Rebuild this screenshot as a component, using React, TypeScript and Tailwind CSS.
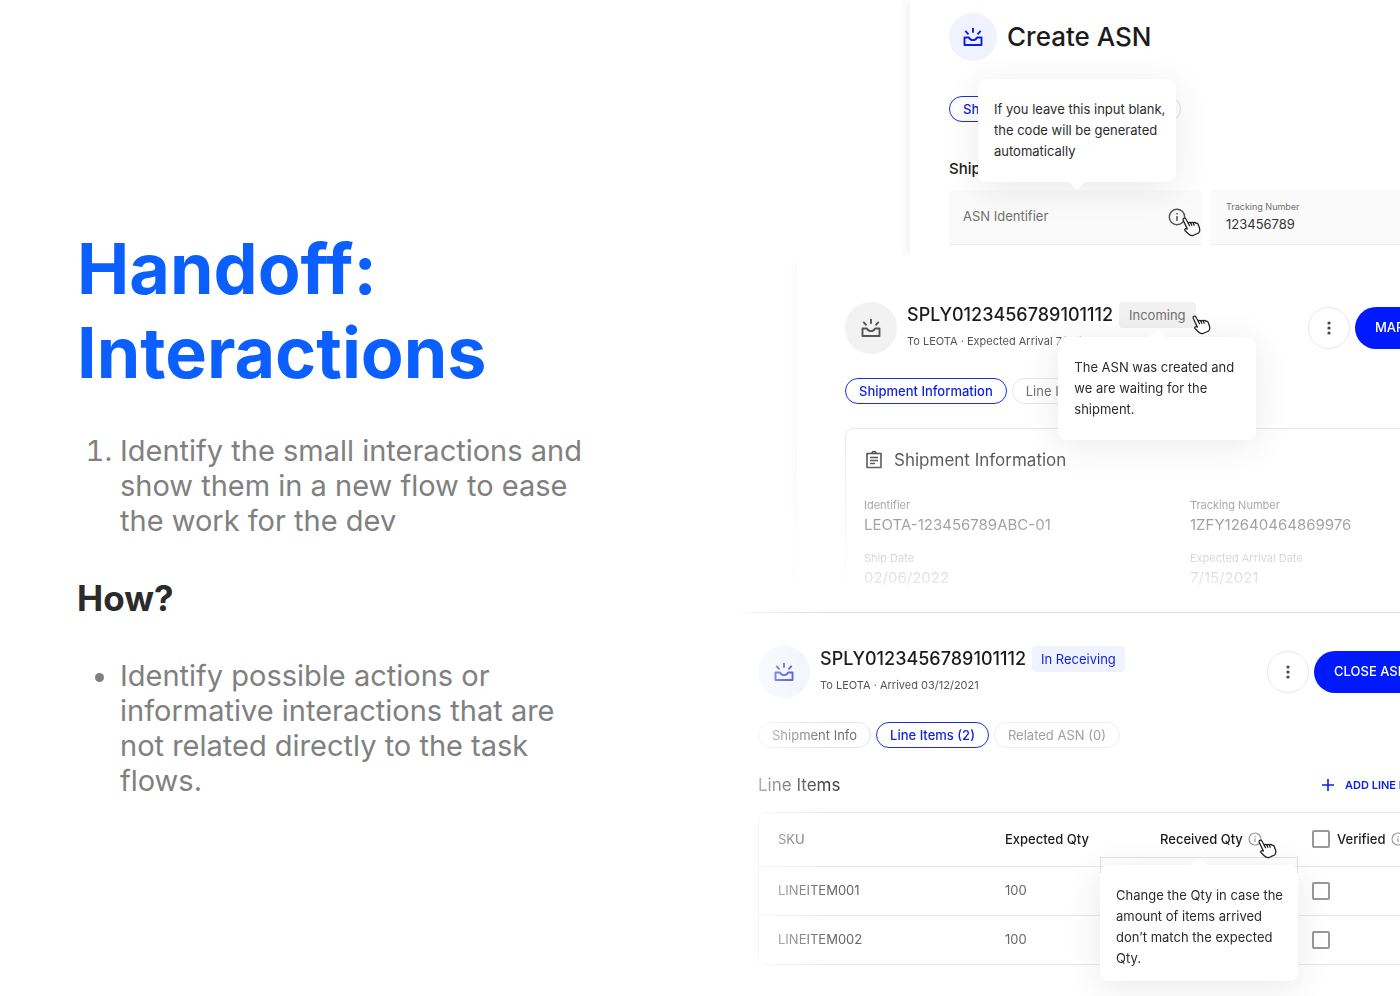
import type { ReactNode } from "react";

export default function App() {
  return (
    <main className="flex min-h-screen overflow-hidden bg-white font-['Inter',sans-serif]">
      <section className="w-[52%] shrink-0 pt-[227px] pl-[77px]">
        <h1 className="text-[70px] leading-[84px] font-bold text-[#0b5fff]">
          Handoff:
          <br />
          Interactions
        </h1>
        <ol className="mt-[38px] w-[520px] list-decimal pl-[43px] text-[29px] leading-[35px] text-[#808080]">
          <li>Identify the small interactions and show them in a new flow to ease the work for the dev</li>
        </ol>
        <h2 className="mt-[38px] text-[35px] leading-[44px] font-bold text-[#2b2b2b]">How?</h2>
        <ul className="mt-[38px] w-[480px] list-disc pl-[43px] text-[29px] leading-[35px] text-[#808080]">
          <li>Identify possible actions or informative interactions that are not related directly to the task flows.</li>
        </ul>
      </section>

      <section className="min-w-0 flex-1 whitespace-nowrap text-[#1c1c1c]">
        <CreatePanel />
        <IncomingPanel />
        <ReceivingPanel />
      </section>
    </main>
  );
}

function CreatePanel() {
  return (
    <div className="overflow-hidden pl-[182px]">
      <div className="h-64 pt-[13px] pl-[39px] shadow-[-4px_0_8px_rgba(0,0,0,0.05)]">
        <div className="flex items-center gap-[10px]">
          <span className="grid size-12 place-items-center rounded-full bg-[#f0f3ff] text-[#0b1fe0]">
            <TrayIcon />
          </span>
          <h3 className="text-[26px] leading-8 font-medium">Create ASN</h3>
        </div>
        <div className="mt-[35px] flex gap-[5px]">
          <Tab active>Shipment Info</Tab>
          <Tab>Line Items (0)</Tab>
        </div>
        <h4 className="mt-9 text-[15px] leading-[22px] font-medium">Shipment Information</h4>
        <div className="mt-[10px] flex gap-[9px]">
          <div className="relative flex h-[55px] w-[253px] shrink-0 items-center rounded-t border-b border-[#eeeeee] bg-[#fafafa] pl-[14px]">
            <input
              aria-label="ASN Identifier"
              placeholder="ASN Identifier"
              className="w-[205px] bg-transparent text-[13px] outline-none placeholder:text-[#707070]"
            />
            <span className="relative text-[#555555]">
              <InfoIcon size={18} />
              <Hand />
            </span>
            <Tooltip place="bottom-full left-[29px] mb-2 pb-5" arrow="top-full">
              If you leave this input blank, the code will be generated automatically
            </Tooltip>
          </div>
          <label className="flex h-[55px] w-[253px] shrink-0 flex-col justify-center rounded-t border-b border-[#eeeeee] bg-[#fafafa] pl-[15px] text-[9px] leading-[14px] text-[#707070]">
            Tracking Number
            <input defaultValue="123456789" className="bg-transparent text-[13px] leading-5 text-[#333333] outline-none" />
          </label>
        </div>
      </div>
    </div>
  );
}

function IncomingPanel() {
  return (
    <div className="mt-[6px] h-[350px] overflow-hidden mask-[linear-gradient(to_bottom,black_170px,transparent_340px)] pl-[69px]">
      <div className="h-full pt-10 pl-12 shadow-[-3px_0_6px_rgba(0,0,0,0.04)]">
        <div className="grid grid-cols-[463px_auto] items-center">
          <div className="flex items-center gap-[10px]">
            <span className="grid size-[52px] place-items-center rounded-full bg-[#f2f2f2] text-[#555555]">
              <TrayIcon />
            </span>
            <div>
              <div className="flex items-center gap-[6px]">
                <h3 className="text-[18px] leading-[26px] font-medium">SPLY0123456789101112</h3>
                <span className="relative z-10 rounded bg-[#f1f1f1] px-[10px] text-[13px] leading-[26px] text-[#707070]">
                  Incoming
                  <Hand />
                  <Tooltip place="top-full left-1/2 mt-[9px] -translate-x-1/2 pb-5" arrow="bottom-full rotate-180">
                    The ASN was created and we are waiting for the shipment.
                  </Tooltip>
                </span>
              </div>
              <p className="text-[11px] leading-[26px] text-[#555555]">To LEOTA · Expected Arrival 7/15/2021</p>
            </div>
          </div>
          <Actions>MARK AS ARRIVED</Actions>
        </div>
        <div className="mt-6 flex gap-[5px]">
          <Tab active>Shipment Information</Tab>
          <Tab>Line Items (2)</Tab>
        </div>
        <div className="mt-6 h-[200px] w-[700px] rounded-lg border border-[#e9e9e9] pt-5 pl-[18px]">
          <h4 className="flex items-center gap-[10px] text-[17px] leading-[22px] text-[#3a3a3a]">
            <ClipboardIcon />
            Shipment Information
          </h4>
          <dl className="mt-[25px] grid grid-cols-[326px_auto] gap-y-[13px]">
            <Field label="Identifier" value="LEOTA-123456789ABC-01" />
            <Field label="Tracking Number" value="1ZFY12640464869976" />
            <Field label="Ship Date" value="02/06/2022" />
            <Field label="Expected Arrival Date" value="7/15/2021" />
          </dl>
        </div>
      </div>
    </div>
  );
}

function ReceivingPanel() {
  return (
    <div className="ml-[7px] border-t border-[#dddddd] mask-[linear-gradient(to_right,transparent,rgba(0,0,0,0.4)_24px,rgba(0,0,0,0.7)_60px,black_95px)] pt-[33px] pb-8 pl-[23px]">
      <div className="grid grid-cols-[509px_auto] items-center">
        <div className="flex items-center gap-[10px]">
          <span className="grid size-[52px] place-items-center rounded-full bg-[#f0f3ff] text-[#0b1fe0]">
            <TrayIcon />
          </span>
          <div>
            <div className="flex items-center gap-[6px]">
              <h3 className="text-[18px] leading-[26px] font-medium">SPLY0123456789101112</h3>
              <span className="rounded bg-[#f0f3ff] px-[9px] text-[13px] leading-[26px] text-[#0b1fe0]">In Receiving</span>
            </div>
            <p className="text-[11px] leading-[26px] text-[#555555]">To LEOTA · Arrived 03/12/2021</p>
          </div>
        </div>
        <Actions>CLOSE ASN</Actions>
      </div>
      <div className="mt-6 flex gap-[5px]">
        <Tab>Shipment Info</Tab>
        <Tab active>Line Items (2)</Tab>
        <Tab faded>Related ASN (0)</Tab>
      </div>
      <div className="mt-[25px] grid grid-cols-[563px_auto] items-center">
        <h4 className="text-[17px] leading-6 text-[#3a3a3a]">Line Items</h4>
        <button className="flex items-center gap-[10px] text-[11px] font-semibold text-[#0b1fe0]">
          <svg width="14" height="14" viewBox="0 0 14 14" stroke="currentColor" strokeWidth="1.6">
            <path d="M7 1v12M1 7h12" />
          </svg>
          ADD LINE ITEM
        </button>
      </div>
      <div className="mt-[15px] w-[734px] rounded-lg border border-[#e9e9e9]">
        <table className="w-full table-fixed text-left text-[13px] text-[#666666]">
          <thead>
            <tr className="h-[53px] text-[#1c1c1c]">
              <th className="w-[227px] pl-[19px] font-normal text-[#555555]">SKU</th>
              <th className="w-[155px] pl-[19px] font-medium">Expected Qty</th>
              <th className="w-[152px] pl-[19px] font-medium">
                <span className="flex items-center gap-[5px]">
                  <span className="relative">
                    Received Qty
                    <Tooltip place="top-full left-0 mt-4 -ml-[60px] pb-3" arrow="bottom-full rotate-180" outlined>
                      Change the Qty in case the amount of items arrived don’t match the expected Qty.
                    </Tooltip>
                  </span>
                  <span className="relative text-[#999999]">
                    <InfoIcon size={14} />
                    <Hand />
                  </span>
                </span>
              </th>
              <th className="pl-[19px] font-medium">
                <span className="flex items-center gap-[5px]">
                  <label className="flex items-center gap-[7px]">
                    <Checkbox />
                    Verified
                  </label>
                  <span className="text-[#999999]">
                    <InfoIcon size={14} />
                  </span>
                </span>
              </th>
            </tr>
          </thead>
          <tbody>
            {["LINEITEM001", "LINEITEM002"].map((sku) => (
              <tr key={sku} className="h-[49px] border-t border-[#e9e9e9]">
                <td className="pl-[19px]">{sku}</td>
                <td className="pl-[19px]">100</td>
                <td />
                <td className="pl-[19px]">
                  <Checkbox label={sku + " verified"} />
                </td>
              </tr>
            ))}
          </tbody>
        </table>
      </div>
    </div>
  );
}

function Tab({ active, faded, children }: { active?: boolean; faded?: boolean; children: ReactNode }) {
  const look = active
    ? "border-[#1a2ee0] font-medium text-[#0b1fe0]"
    : faded
      ? "border-[#eeeeee] text-[#a0a0a0]"
      : "border-[#e4e4e4] text-[#707070]";
  return <button className={"h-[26px] rounded-full border px-[13px] text-[13px] leading-6 " + look}>{children}</button>;
}

function Actions({ children }: { children: ReactNode }) {
  return (
    <div className="flex gap-[5px]">
      <button aria-label="More" className="grid size-[42px] shrink-0 place-items-center rounded-full border border-[#e6e6e6] text-[#444444]">
        <svg width="4" height="14" viewBox="0 0 4 14" fill="currentColor">
          <circle cx="2" cy="2" r="1.6" />
          <circle cx="2" cy="7" r="1.6" />
          <circle cx="2" cy="12" r="1.6" />
        </svg>
      </button>
      <button className="h-[42px] shrink-0 rounded-full bg-[#0019ff] px-5 text-[13px] font-medium text-white">{children}</button>
    </div>
  );
}

function Field({ label, value }: { label: string; value: string }) {
  return (
    <div>
      <dt className="text-[11px] leading-[18px] text-[#666666]">{label}</dt>
      <dd className="text-[15px] leading-[22px] text-[#333333]">{value}</dd>
    </div>
  );
}

function Checkbox({ label }: { label?: string }) {
  return (
    <input
      type="checkbox"
      aria-label={label}
      className="block size-[18px] shrink-0 appearance-none rounded-[2px] border-2 border-[#999999] bg-white"
    />
  );
}

function Tooltip({
  place,
  arrow,
  outlined,
  children,
}: {
  place: string;
  arrow: string;
  outlined?: boolean;
  children: ReactNode;
}) {
  return (
    <div
      role="tooltip"
      className={
        "absolute z-10 w-[198px] rounded-lg bg-white pt-5 pr-2 pl-4 text-[13px] leading-[21px] font-normal whitespace-normal text-[#2b2b2b] shadow-[0_6px_36px_rgba(0,0,0,0.09)] " +
        place
      }
    >
      {outlined && (
        <span className="absolute -top-2 left-0 -z-10 h-4 w-full border border-b-0 border-[#dddddd]" />
      )}
      <svg className={"absolute left-1/2 -ml-2 " + arrow} width="16" height="8" viewBox="0 0 16 8">
        <path d="M0 0h16L9 7q-1 1-2 0z" fill="white" />
      </svg>
      {children}
    </div>
  );
}

function TrayIcon() {
  return (
    <svg width="20" height="20" viewBox="0 0 20 20" fill="none" stroke="currentColor" strokeWidth="1.9" strokeLinejoin="round">
      <path d="M1.500 10.500h4.300c.9 1.700 2.300 2.600 4.200 2.600s3.300-.9 4.200-2.600h4.300V18h-17z" />
      <path d="M10 1v4.800M2.300 3.800l3.200 3.500M17.700 3.800l-3.200 3.500" />
    </svg>
  );
}

function InfoIcon({ size }: { size: number }) {
  return (
    <svg width={size} height={size} viewBox="0 0 18 18" fill="none" stroke="currentColor" strokeWidth="1.5">
      <circle cx="9" cy="9" r="7.700" />
      <path d="M9 8v5M9 5v1.600" />
    </svg>
  );
}

function ClipboardIcon() {
  return (
    <svg width="20" height="20" viewBox="0 0 20 20" fill="none" stroke="currentColor" strokeWidth="1.6" strokeLinejoin="round">
      <path d="M3 3.500h14v14H3zM6 7.500h8M6 10.500h8M6 13.500h5" />
      <path d="M8 3.500a2 2 0 0 1 4 0" />
    </svg>
  );
}

function Hand() {
  return (
    <svg
      className="absolute top-1/2 left-full z-20 -ml-1"
      width="20"
      height="20"
      viewBox="0 0 20 20"
      fill="white"
      stroke="#222222"
      strokeWidth="1.3"
      strokeLinejoin="round"
      strokeLinecap="round"
    >
      <path d="M1.500 1.500c1-.8 2-.2 2.500.7l2.300 4c.3-1 2-1.100 2.500-.2.400-.9 2-.9 2.500 0 .5-.8 2-.7 2.500.3.900-.4 2 .1 2.400 1.200l1.300 3.500c.7 2.200.2 3.800-.9 5L11 18.500c-2 .4-3.500-.5-4.500-1.500L3 13.500c-.8-1 .2-2.300 1.500-1.800l.9.4L1.300 3.500c-.3-.8-.3-1.500.2-2z" />
      <path d="M6.300 6.200l1.200 2.500M8.800 6l1 2.300M11.300 6l.9 2.200" />
    </svg>
  );
}
